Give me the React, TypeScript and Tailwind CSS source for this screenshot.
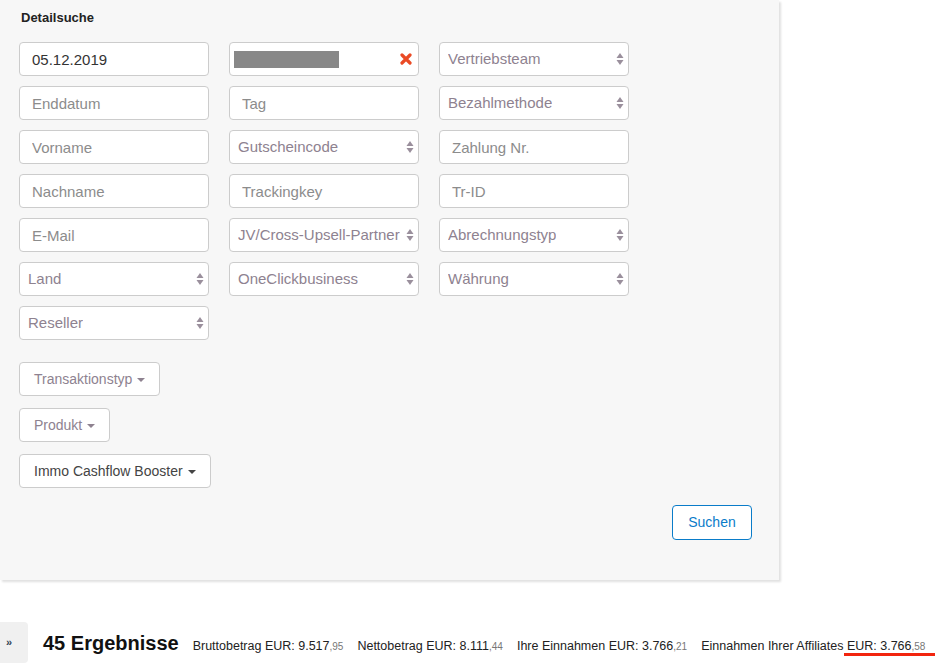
import React from 'react';

const font = { fontFamily: '"Liberation Sans", Arial, Helvetica, sans-serif' };

type Field =
  | { kind: 'input'; label: string; value?: string }
  | { kind: 'select'; label: string }
  | { kind: 'redacted' }
  | { kind: 'empty' };

const fields: Field[] = [
  { kind: 'input', label: 'Startdatum', value: '05.12.2019' },
  { kind: 'redacted' },
  { kind: 'select', label: 'Vertriebsteam' },
  { kind: 'input', label: 'Enddatum' },
  { kind: 'input', label: 'Tag' },
  { kind: 'select', label: 'Bezahlmethode' },
  { kind: 'input', label: 'Vorname' },
  { kind: 'select', label: 'Gutscheincode' },
  { kind: 'input', label: 'Zahlung Nr.' },
  { kind: 'input', label: 'Nachname' },
  { kind: 'input', label: 'Trackingkey' },
  { kind: 'input', label: 'Tr-ID' },
  { kind: 'input', label: 'E-Mail' },
  { kind: 'select', label: 'JV/Cross-Upsell-Partner' },
  { kind: 'select', label: 'Abrechnungstyp' },
  { kind: 'select', label: 'Land' },
  { kind: 'select', label: 'OneClickbusiness' },
  { kind: 'select', label: 'Währung' },
  { kind: 'select', label: 'Reseller' },
];

function Arrows() {
  return (
    <svg width="8" height="14" viewBox="0 0 8 14" className="shrink-0">
      <path d="M4 1 L7.5 6 L0.5 6 Z" fill="#9a8f9c" />
      <path d="M4 13 L7.5 8 L0.5 8 Z" fill="#9a8f9c" />
    </svg>
  );
}

function Caret() {
  return <span className="ml-[5px] inline-block border-x-[4px] border-t-[4px] border-x-transparent border-t-current align-middle" />;
}

function FieldBox({ f }: { f: Field }) {
  if (f.kind === 'empty') return <div />;
  const box = 'h-[34px] w-[190px] rounded-[4px] border border-[#cccccc] bg-white flex items-center text-[15px]';
  if (f.kind === 'redacted') {
    return (
      <div className={`${box} pl-[4px] pr-[6px] justify-between`}>
        <div className="h-[17px] w-[105px] bg-[#888888]" />
        <svg width="12" height="12" viewBox="0 0 12 12">
          <path d="M2 2 L10 10 M10 2 L2 10" stroke="#ea4a24" strokeWidth="3.2" strokeLinecap="round" />
        </svg>
      </div>
    );
  }
  if (f.kind === 'select') {
    return (
      <div className={`${box} pl-[8px] pr-[4px] justify-between`}>
        <span className="max-w-[166px] overflow-hidden whitespace-nowrap text-[#8e8290]">{f.label}</span>
        <Arrows />
      </div>
    );
  }
  return (
    <input
      readOnly
      value={f.value ?? ''}
      placeholder={f.label}
      className={`${box} px-[12px] text-[#333333] placeholder:text-[#8c8c8c] outline-none`}
      style={font}
    />
  );
}

function Amount({ label, main, cents }: { label: string; main: string; cents: string }) {
  return (
    <span className="shrink-0 whitespace-nowrap">
      {label} EUR: {main}
      <span className="text-[10px] text-[#777777]">,{cents}</span>
    </span>
  );
}

export default function App() {
  return (
    <div className="relative h-[668px] w-[940px] overflow-hidden bg-white" style={font}>
      <div className="w-[779px] bg-[#f7f7f7] pb-[40px] shadow-[2px_2px_2px_rgba(0,0,0,0.12)]">
        <h3 className="pl-[21px] pt-[10px] text-[13px] font-bold leading-[16px] text-[#222222]">Detailsuche</h3>
        <div className="ml-[19px] mt-[16px] grid grid-cols-[190px_190px_190px] gap-x-[20px] gap-y-[10px]">
          {fields.map((f, i) => (
            <FieldBox key={i} f={f} />
          ))}
        </div>
        <div className="ml-[19px] mt-[22px] flex flex-col items-start gap-[12px] text-[14px]">
          <button className="h-[34px] rounded-[4px] border border-[#cccccc] bg-white px-[14px] text-[#8e8290]">
            Transaktionstyp
            <Caret />
          </button>
          <button className="h-[34px] rounded-[4px] border border-[#cccccc] bg-white px-[14px] text-[#8e8290]">
            Produkt
            <Caret />
          </button>
          <button className="h-[34px] rounded-[4px] border border-[#cccccc] bg-white px-[14px] text-[#444444]">
            Immo Cashflow Booster
            <Caret />
          </button>
        </div>
        <div className="mr-[27px] mt-[17px] flex justify-end">
          <button className="h-[35px] w-[80px] rounded-[4px] border border-[#0a7cc9] bg-white text-[14px] text-[#0a7cc9]">
            Suchen
          </button>
        </div>
      </div>

      <div className="mt-[42px] flex w-[940px] items-center">
        <div className="flex h-[41px] w-[28px] shrink-0 items-center rounded-r-[4px] bg-[#f0f0f0] pl-[6px] text-[11px] font-bold text-[#334455]">
          »
        </div>
        <div className="ml-[15px] flex items-baseline gap-[14px] text-[12.5px] text-[#222222]">
          <span className="shrink-0 whitespace-nowrap text-[20px] font-bold text-[#111111]">45 Ergebnisse</span>
          <Amount label="Bruttobetrag" main="9.517" cents="95" />
          <Amount label="Nettobetrag" main="8.111" cents="44" />
          <Amount label="Ihre Einnahmen" main="3.766" cents="21" />
          <span className="shrink-0 whitespace-nowrap">
            Einnahmen Ihrer Affiliates{' '}
            <span className="ml-[-3px] border-b-[3px] border-[#f2250e] pl-[3px] pr-[10px]">
              EUR: 3.766<span className="text-[10px] text-[#777777]">,58</span>
            </span>
          </span>
        </div>
      </div>
    </div>
  );
}
